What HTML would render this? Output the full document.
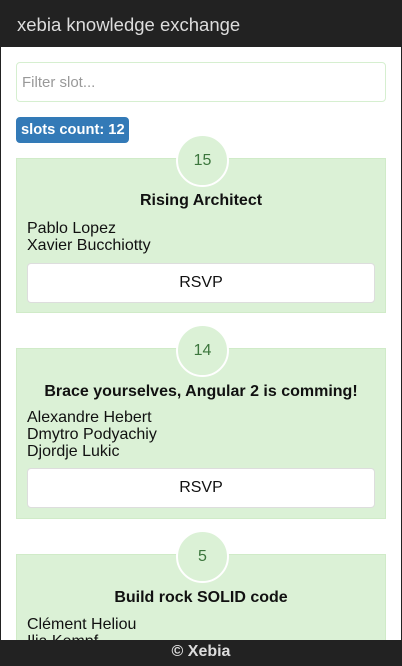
<!DOCTYPE html>
<html><head><meta charset="utf-8"><style>
*{box-sizing:border-box;margin:0;padding:0}
html,body{width:402px;height:666px;overflow:hidden}
body{background:#fff;font-family:"Liberation Sans",Arial,sans-serif;position:relative}
.sl{position:absolute;top:0;width:1px;height:666px;background:#222;z-index:5}
.hdr{position:absolute;left:0;top:0;width:402px;height:47px;background:#222;color:#ddd;font-size:18.5px;padding:15px 0 0 17px;line-height:20px}
.inp{position:absolute;left:16px;top:62px;width:370px;height:40px;border:1px solid #d6efd0;border-radius:4px;color:#999;font-size:15px;padding:11px 0 0 5px}
.badge{position:absolute;left:16px;top:117px;width:113px;height:26px;background:#337ab7;border-radius:4px;color:#fff;font-weight:bold;font-size:14.7px;padding:5px 0 0 5px}
.card{position:absolute;left:16px;width:370px;background:#dbf1d6;border:1px solid #d0ebc8}
.circ{position:absolute;left:176px;width:53px;height:53px;border-radius:50%;background:#dbf1d6;border:2px solid #fff;color:#3c763d;font-size:16px;text-align:center;line-height:49px}
.t{position:absolute;left:0;width:368px;text-align:center;font-weight:bold;font-size:16px;color:#111}
.n{position:absolute;left:10px;font-size:16px;line-height:17px;color:#111}
.btn{position:absolute;left:10px;width:348px;height:40px;background:#fff;border:1px solid #ddd;border-radius:4px;text-align:center;font-size:16px;line-height:38px;color:#111}
.ftr{position:absolute;left:0;top:640px;width:402px;height:26px;background:#222;color:#ddd;font-weight:bold;font-size:16px;text-align:center;line-height:24px;z-index:4}
</style></head><body>
<div class="sl" style="left:0"></div><div class="sl" style="left:401px"></div>
<div class="hdr">xebia knowledge exchange</div>
<div class="inp">Filter slot...</div>
<div class="badge">slots count: 12</div>

<div class="card" style="top:158px;height:155px">
<div class="t" style="top:33px">Rising Architect</div>
<div class="n" style="top:61px">Pablo Lopez<br>Xavier Bucchiotty</div>
<div class="btn" style="top:104px">RSVP</div>
</div>
<div class="circ" style="top:134px">15</div>

<div class="card" style="top:348px;height:171px">
<div class="t" style="top:34px">Brace yourselves, Angular 2 is comming!</div>
<div class="n" style="top:60px">Alexandre Hebert<br>Dmytro Podyachiy<br>Djordje Lukic</div>
<div class="btn" style="top:119px">RSVP</div>
</div>
<div class="circ" style="top:324px">14</div>

<div class="card" style="top:554px;height:100px">
<div class="t" style="top:34px">Build rock SOLID code</div>
<div class="n" style="top:61px">Clément Heliou<br>Ilia Kempf</div>
</div>
<div class="circ" style="top:530px">5</div>

<div class="ftr">© Xebia</div>
</body></html>
